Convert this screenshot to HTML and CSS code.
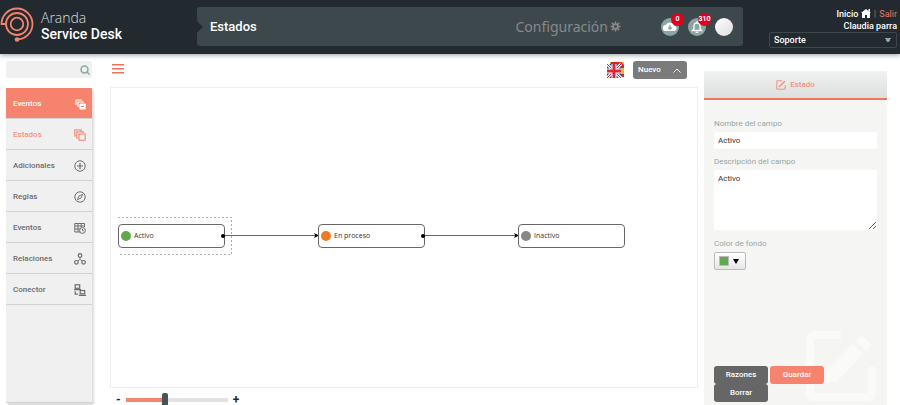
FILE: index.html
```html
<!DOCTYPE html>
<html lang="es">
<head>
<meta charset="utf-8">
<title>Aranda Service Desk - Estados</title>
<link rel="stylesheet" href="styles.css">
</head>
<body>
<header class="top">
  <div class="brand">
    <svg class="logo" viewBox="0 0 34 36" fill="none" stroke="#f4836e" stroke-width="1.800">
      <circle cx="17" cy="17" r="6.300"/>
      <path d="M17 28a11 11 0 1 1 11-11 11 11 0 0 1-11 11M6 17H1.500A15.500 15.500 0 1 1 17 32.500"/>
      <circle cx="17" cy="32.500" r="2.300" fill="#f4836e" stroke="none"/>
    </svg>
    <div class="brand-name"><span>Aranda</span><strong>Service Desk</strong></div>
  </div>
  <div class="bar">
    <h1>Estados</h1>
    <div class="config">Configuración
      <svg viewBox="0 0 12 12" fill="none" stroke="#87898a"><circle cx="6" cy="6" r="2.600" stroke-width="2"/><path stroke-width="1.700" d="M6 .5v2.500M6 9v2.500M.5 6h2.500M9 6h2.500M2 2l1.800 1.800M8.200 8.200l1.800 1.800M10 2L8.200 3.800M3.800 8.200L2 10"/></svg>
    </div>
    <div class="alerts">
      <button class="round" aria-label="Descargas">
        <svg viewBox="0 0 18 18"><path fill="#fff" d="M5 13a3 3 0 0 1-.3-6A4.500 4.500 0 0 1 13 7.500 2.800 2.800 0 0 1 13.500 13z"/><path fill="none" stroke="#8aa5a2" stroke-width="1.500" d="M9 7v4M7.200 9.500L9 11.300l1.800-1.800"/></svg>
        <span class="badge">0</span>
      </button>
      <button class="round" aria-label="Notificaciones">
        <svg viewBox="0 0 18 18" fill="none" stroke="#fff" stroke-width="1.300"><path d="M4.500 12.500h9L12 10.800V8a3 3 0 0 0-6 0v2.800zM9 3v2M7.700 14.300h2.600"/></svg>
        <span class="badge">310</span>
      </button>
      <button class="round avatar" aria-label="Perfil"></button>
    </div>
  </div>
  <div class="user">
    <div><a href="#">Inicio <svg viewBox="0 0 10 9"><path fill="#fff" d="M5 0l5 4H9v5H6V6H4v3H1V4H0zM7.500 0H9v3L7.500 2z"/></svg></a> <span class="divider">|</span> <a class="exit" href="#">Salir</a></div>
    <div>Claudia parra</div>
    <select aria-label="Proyecto"><option>Soporte</option></select>
  </div>
</header>
<div class="page">
  <aside class="side">
    <div class="search">
      <input type="search" aria-label="Buscar">
      <svg viewBox="0 0 10 10" fill="none" stroke="#8aa9a5" stroke-width="1.500"><circle cx="4.500" cy="4.500" r="3.500"/><path d="M6.500 6.500L9.500 9.500"/></svg>
    </div>
    <nav class="menu">
      <a class="head" href="#">Eventos<svg viewBox="0 0 12 12" fill="none" stroke="currentColor" stroke-width="1.200"><path d="M2 7V2h6M4 9V4h6"/><rect x="6" y="6" width="5.200" height="5" rx=".5" fill="currentColor"/><path stroke="#f4836e" d="M7 8.500h3"/></svg></a>
      <a class="current" href="#">Estados<svg viewBox="0 0 12 12" fill="none" stroke="currentColor" stroke-width="1.200"><path d="M2.500 7H.8V.8h6.400v1.500M4.500 9H2.800V2.800h6.400v1.500"/><rect x="5" y="5" width="6.200" height="6.200"/></svg></a>
      <a href="#">Adicionales<svg viewBox="0 0 12 12" fill="none" stroke="currentColor"><circle cx="6" cy="6" r="5.200"/><path stroke-width="1.200" d="M6 3v6M3 6h6"/></svg></a>
      <a href="#">Reglas<svg viewBox="0 0 12 12" fill="none" stroke="currentColor"><circle cx="6" cy="6" r="5.200"/><path d="M8.700 3.300L7 7 3.300 8.700 5 5z" stroke-width=".9"/></svg></a>
      <a href="#">Eventos<svg viewBox="0 0 12 12" fill="none" stroke="currentColor"><path d="M6 10H.8V1.500h9.700V5M1 4h9.500M1 7h5M4 2v8M7.200 2v3.500"/><circle cx="8.500" cy="8.500" r="2.900" fill="#f0f0f0"/><path d="M8.500 7v1.700h1.200"/></svg></a>
      <a href="#">Relaciones<svg viewBox="0 0 12 12" fill="none" stroke="currentColor" stroke-width="1.200"><circle cx="6" cy="2.500" r="1.800"/><circle cx="2.400" cy="9.300" r="1.800"/><circle cx="9.600" cy="9.300" r="1.800"/><path stroke-width=".8" d="M6 4.300v2.200M4 7.800l2-1.300 2 1.300"/></svg></a>
      <a href="#">Conector<svg viewBox="0 0 12 12" fill="none" stroke="currentColor" stroke-width="1.200"><rect x="1.200" y=".8" width="4.500" height="3.500"/><path d="M0 5.700h7M1.200 7.200v3H4M4.800 11.300H12"/><rect x="6.200" y="6.500" width="4.500" height="3.300"/></svg></a>
    </nav>
  </aside>
  <main class="work">
    <div class="tools">
      <button class="burger" aria-label="Menú"><svg viewBox="0 0 12 10" fill="#f4705a"><path d="M0 0h12v1.500H0zM0 4h12v1.500H0zM0 8h12v1.500H0z"/></svg></button>
      <svg class="flag" viewBox="0 0 17 16"><path fill="#e7b92b" d="M3 0h14v14H8z"/><path fill="#d8222e" d="M4 0h10l3 3v3H2zM13 12h4v3h-4z"/><path fill="#294b9b" d="M0 2h14v14H0z"/><path stroke="#fff" stroke-width="3" d="M0 2l14 14M14 2L0 16"/><path stroke="#d8222e" d="M0 2l14 14M14 2L0 16"/><path stroke="#fff" stroke-width="5" d="M7 2v14M0 9h14"/><path stroke="#dc2639" stroke-width="3" d="M7 2v14M0 9h14"/></svg>
      <button class="new">Nuevo<svg viewBox="0 0 8 5" fill="none" stroke="#fff"><path d="M.5 4.500L4 1l3.500 3.500"/></svg></button>
    </div>
    <section class="canvas">
      <svg class="links" width="520" height="60" viewBox="0 0 520 60">
        <path d="M7 11.500H120.500V48.500H7" fill="none" stroke="#aaa" stroke-dasharray="2 2"/>
        <path d="M113 29.500H206M313 29.500H406" stroke="#666"/>
        <path d="M208 29.500l-5-2.500 1.200 2.500-1.200 2.500zM408 29.500l-5-2.500 1.200 2.500-1.200 2.500z"/>
      </svg>
      <div class="node start linked"><b></b>Activo</div>
      <div class="node middle linked"><b></b>En proceso</div>
      <div class="node end"><b></b>Inactivo</div>
    </section>
    <div class="zoom"><span>-</span><input type="range" aria-label="Zoom" min="0" max="100" value="38"><span>+</span></div>
  </main>
  <form class="panel">
    <h2><svg viewBox="0 0 10 10" fill="none" stroke="currentColor"><path d="M6 .8H.8v8.400h8.400V5"/><path stroke-width="1.500" d="M3 7l5.800-5.800"/></svg>Estado</h2>
    <div class="fields">
      <label for="name">Nombre del campo</label>
      <input id="name" type="text" value="Activo">
      <label for="desc">Descripción del campo</label>
      <textarea id="desc">Activo</textarea>
      <label for="color">Color de fondo</label>
      <button id="color" class="color" type="button"><i></i><svg viewBox="0 0 6 5"><path d="M0 0h6L3 5z"/></svg></button>
    </div>
    <div class="actions">
      <svg class="mark" viewBox="0 0 70 70" fill="none" stroke="#fafaf9" stroke-width="8"><path d="M35 4H8q-4 0-4 4v54q0 4 4 4h54q4 0 4-4V36"/><path fill="#fafaf9" stroke="none" d="M20 52V40L47 13l10 10L31 51zM50 10l6-6 10 10-6 6z"/></svg>
      <button type="button">Razones</button><button type="submit" class="save">Guardar</button><button type="button">Borrar</button>
    </div>
  </form>
</div>
</body>
</html>
```
FILE: styles.css
```css
* { box-sizing: border-box; }
body {
  margin: 0;
  height: 100vh;
  display: flex;
  flex-direction: column;
  overflow: hidden;
  background: #fff;
  font: 8px/12px Roboto, sans-serif;
  color: #333;
}
button, input, textarea, select { font: inherit; border: 0; margin: 0; padding: 0; }
a { color: inherit; text-decoration: none; }
h1, h2 { margin: 0; font-weight: 400; }
svg { display: block; flex: none; }

.top {
  display: grid;
  grid-template-columns: 197px 1fr 157px;
  height: 54px;
  flex: none;
  background: #222a30;
  box-shadow: 0 1px 5px #999;
  color: #fff;
  z-index: 1;
}
.brand { display: flex; gap: 7px; padding-top: 7px; }
.logo { width: 34px; height: 36px; }
.brand-name { display: flex; flex-direction: column; padding-top: 3px; font: 14px/16px "Open Sans", sans-serif; }
.brand-name span { font-weight: 300; color: #ddd; }
.brand-name strong { font: 500 14px/16px Roboto, sans-serif; }
.bar {
  position: relative;
  display: flex;
  align-items: center;
  margin: 7px 0 8px;
  padding: 0 10px 0 13px;
  border-radius: 3px;
  background: #3d484d;
}
.bar::before {
  content: "";
  position: absolute;
  left: 0;
  border: 6px solid transparent;
  border-left-color: #222a30;
  border-right: 0;
}
.bar h1 { flex: 1; font: 500 13px/16px Roboto, sans-serif; }
.config { display: flex; align-items: center; gap: 2px; margin-right: 40px; font: 14px/18px "Noto Sans", sans-serif; color: #87898a; }
.config svg { width: 11px; height: 11px; }
.alerts { display: flex; gap: 9px; }
.round { position: relative; width: 18px; height: 18px; border-radius: 50%; background: #8aa5a2; }
.avatar { background: linear-gradient(135deg, #fff, #ddd); }
.badge {
  position: absolute;
  top: -5px;
  left: 10px;
  width: 13px;
  height: 13px;
  border-radius: 50%;
  background: #e2001f;
  color: #fff;
  font: 700 7px/13px Roboto, sans-serif;
}
.user { padding: 8px 3px 0 26px; text-align: right; font: 500 9px/12px Roboto, sans-serif; }
.user svg { display: inline-block; width: 10px; height: 9px; vertical-align: -1px; }
.user .divider { margin: 0 1px; color: #b6614f; }
.user .exit { color: #ef7560; font-weight: 400; }
.user select {
  appearance: none;
  width: 100%;
  height: 16px;
  padding: 0 4px;
  border: 1px solid #3d484d;
  border-radius: 2px;
  background: conic-gradient(from -31deg at 50% 100%, #8aa5a2 62deg, transparent 0) right 5px center / 6px 5px no-repeat;
  color: #fff;
}

.page {
  flex: 1;
  min-height: 0;
  display: grid;
  grid-template: 1fr / 86px 1fr 183px;
  padding: 0 13px 0 6px;
}
.side { display: flex; flex-direction: column; gap: 10px; padding: 7px 0 2px; }
.search { display: flex; align-items: center; height: 17px; padding-right: 2px; border-radius: 3px; background: #f0f0f0; }
.search input { flex: 1; min-width: 0; background: none; }
.search svg { width: 10px; height: 10px; }
.menu { flex: 1; background: #f0f0f0; border-bottom: 1px solid #d2d2d2; box-shadow: 2px 3px 2px #ddd; }
.menu a {
  display: flex;
  justify-content: space-between;
  align-items: center;
  height: 31px;
  padding: 2px 6px 0 7px;
  border-bottom: 1px solid #d2d2d2;
  font-weight: 500;
  color: #6c6c6c;
}
.menu svg { width: 12px; height: 12px; }
.menu .head { background: #f5836e; color: #fff; }
.menu .current { color: #f4907e; }

.work { display: flex; flex-direction: column; min-width: 0; padding: 7px 6px 0 18px; }
.tools { display: flex; align-items: center; height: 18px; margin-bottom: 8px; padding-right: 11px; }
.burger { width: 12px; height: 10px; margin: 0 auto 2px 2px; background: none; }
.burger svg { width: 12px; height: 10px; }
.flag { width: 17px; height: 16px; margin-right: 9px; }
.new {
  display: flex;
  align-items: center;
  justify-content: space-between;
  width: 54px;
  height: 18px;
  padding: 0 6px 0 5px;
  border-radius: 3px;
  background: #7b7b7b;
  color: #fff;
  font-weight: 500;
}
.new svg { width: 8px; height: 5px; }
.canvas { position: relative; flex: 1; border: 1px solid #edf0f0; }
.links { position: absolute; left: 0; top: 118px; }
.node {
  position: absolute;
  top: 136px;
  display: flex;
  align-items: center;
  gap: 3px;
  width: 107px;
  height: 24px;
  padding-left: 2px;
  border: 1px solid #666;
  border-radius: 4px;
  background: #fff;
  font: 7px/10px "Open Sans", sans-serif;
}
.node b { width: 10px; height: 10px; border-radius: 50%; }
.start { left: 7px; }
.middle { left: 207px; }
.end { left: 407px; }
.start b { background: #62a84e; }
.middle b { background: #ef7c24; }
.end b { background: #888; }
.linked::after { content: ""; position: absolute; right: -1px; width: 4px; height: 4px; border-radius: 50%; background: #000; }
.zoom { display: flex; align-items: center; gap: 5px; height: 17px; padding: 6px 0 0 6px; font: 700 12px/10px Roboto, sans-serif; color: #222a30; }
.zoom input { appearance: none; width: 102px; height: 4px; background: linear-gradient(90deg, #f5836e 39px, #e2e2e2 39px); }
.zoom input::-webkit-slider-thumb { appearance: none; width: 6px; height: 14px; border-radius: 2px; background: #46545a; }

.panel { display: flex; flex-direction: column; margin-top: 17px; background: #f5f5f3; }
.panel h2 {
  display: flex;
  align-items: center;
  justify-content: center;
  gap: 4px;
  height: 29px;
  border-bottom: 2px solid #f5755c;
  background: linear-gradient(#f1f2f2, #dddfdf);
  font: 500 8px/12px Roboto, sans-serif;
  color: #f4907e;
}
.panel h2 svg { width: 10px; height: 10px; }
.fields { display: flex; flex-direction: column; padding: 18px 10px 0; }
.fields label { margin-bottom: 2px; color: #93a8a5; }
.fields input, .fields textarea { border-radius: 2px; background: #fff; color: #333; }
.fields input { height: 17px; margin-bottom: 7px; padding: 0 4px; }
.fields textarea { height: 60px; margin-bottom: 8px; padding: 3px 4px; resize: vertical; }
.fields .color {
  display: flex;
  align-items: center;
  justify-content: space-between;
  width: 32px;
  height: 18px;
  padding: 0 6px 0 4px;
  border: 1px solid #bbb;
  border-radius: 2px;
  background: linear-gradient(#fff, #e6e6e6);
}
.color i { width: 10px; height: 10px; border: 1px solid #bbb; background: #62a84e; }
.color svg { width: 6px; height: 5px; }
.actions { position: relative; display: flex; flex-wrap: wrap; gap: 0 2px; margin-top: auto; padding: 0 60px 3px 10px; }
.actions button { position: relative; width: 54px; height: 18px; border-radius: 3px; background: #666; color: #fff; font-weight: 500; }
.actions .save { background: #f5836e; }
.mark { position: absolute; right: 11px; bottom: 4px; width: 70px; height: 70px; }
```
